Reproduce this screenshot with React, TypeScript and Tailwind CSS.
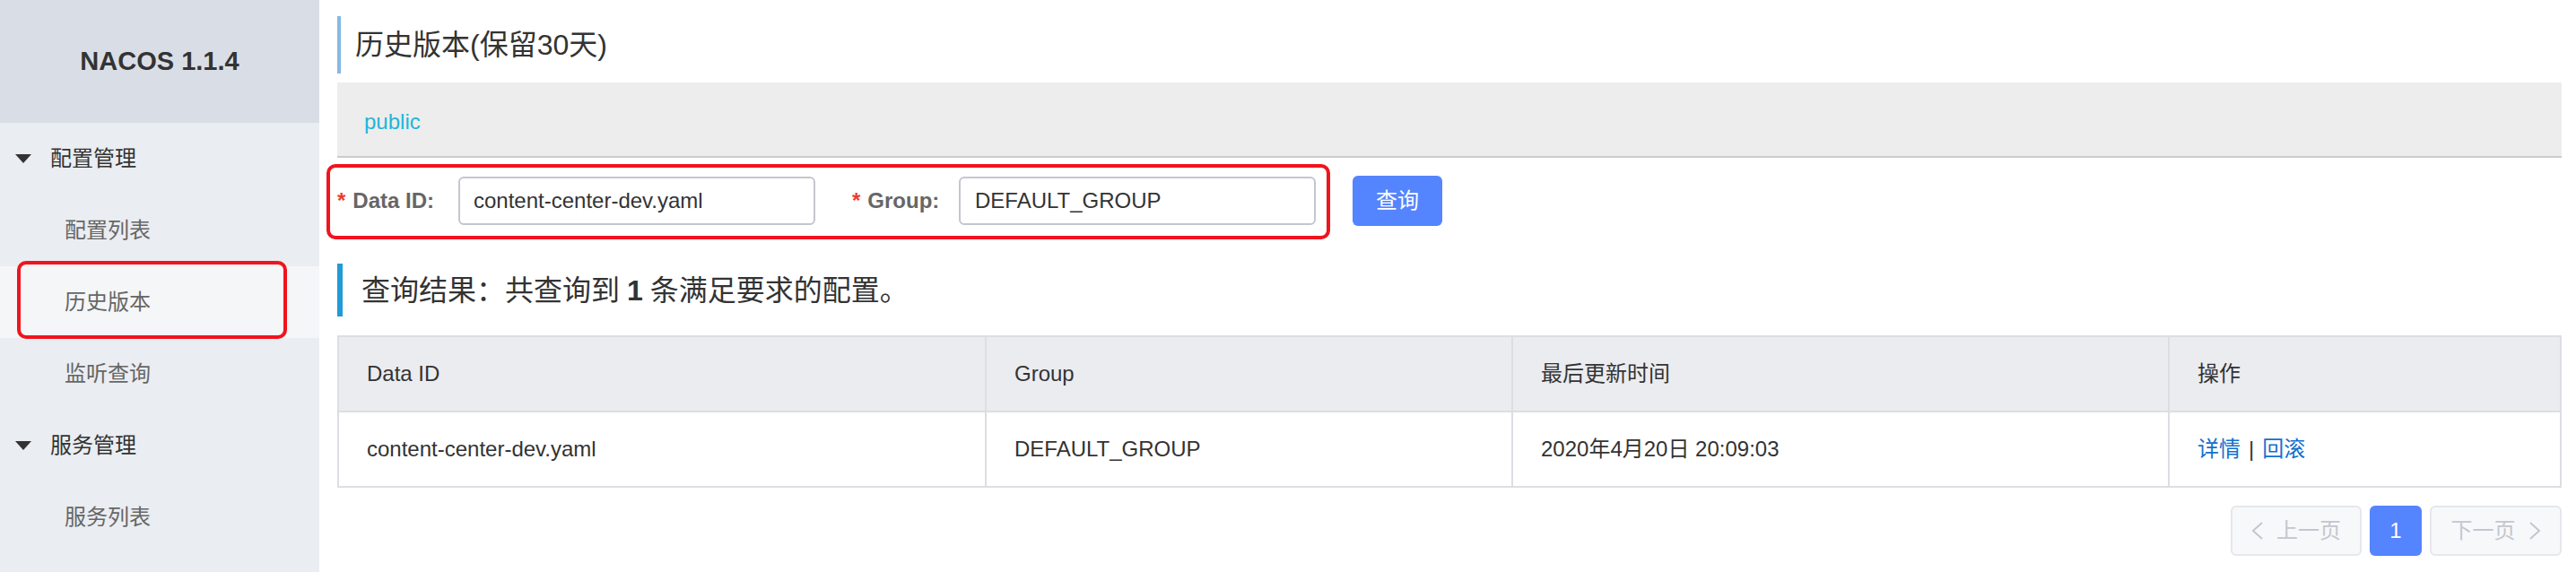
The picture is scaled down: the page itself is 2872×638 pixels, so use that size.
const font = "font-['Liberation_Sans','Noto_Sans_CJK_SC',sans-serif]"

function Caret() {
  return (
    <svg width="18" height="10" viewBox="0 0 18 10" className="shrink-0">
      <polygon points="0,0 18,0 9,10" fill="#333" />
    </svg>
  )
}

function Chevron({ dir }: { dir: "left" | "right" }) {
  return (
    <svg width="14" height="20" viewBox="0 0 14 20" className="shrink-0">
      <polyline
        points={dir === "left" ? "12,1 2,10 12,19" : "2,1 12,10 2,19"}
        fill="none"
        stroke="#c4c6cf"
        strokeWidth="2"
      />
    </svg>
  )
}

function Sidebar() {
  return (
    <aside className="w-[356px] shrink-0 bg-[#eaedf1]">
      <div className="flex h-[137px] items-center justify-center bg-[#d9dee6] text-[29px] font-bold text-[#333]">
        NACOS 1.1.4
      </div>
      <div className="flex h-[80px] items-center gap-[21px] pl-[17px] text-[24px] text-[#333]">
        <Caret />
        配置管理
      </div>
      <div className="flex h-[80px] items-center pl-[72px] text-[24px] text-[#666]">配置列表</div>
      <div className="relative flex h-[80px] items-center bg-[#f5f6f8] pl-[72px] text-[24px] text-[#666]">
        历史版本
        <div className="absolute -top-[6px] left-[19px] h-[87px] w-[301px] rounded-[10px] border-4 border-[#f0141e]" />
      </div>
      <div className="flex h-[80px] items-center pl-[72px] text-[24px] text-[#666]">监听查询</div>
      <div className="flex h-[80px] items-center gap-[21px] pl-[17px] text-[24px] text-[#333]">
        <Caret />
        服务管理
      </div>
      <div className="flex h-[80px] items-center pl-[72px] text-[24px] text-[#666]">服务列表</div>
    </aside>
  )
}

const columns = ["Data ID", "Group", "最后更新时间", "操作"]

export default function App() {
  return (
    <div className={`flex h-[638px] w-[2872px] overflow-hidden bg-white ${font}`}>
      <Sidebar />
      <main className="min-w-0 flex-1 pr-[16px] pl-[20px]">
        <div className="mt-[18px] flex h-[64px] items-center border-l-4 border-[#88b8e0] pl-[16px] text-[32px] text-[#333]">
          历史版本(保留30天)
        </div>

        <div className="mt-[10px] flex h-[84px] items-center border-b-2 border-[#cccccc] bg-[#ededed] pt-[6px] pl-[30px] text-[24px] text-[#1fb5d9]">
          public
        </div>

        <div className="relative mt-[20px] flex h-[56px] items-center">
          <div className="flex w-[135px] items-center text-[24px] font-bold text-[#666]">
            <span className="mr-[8px] text-[#ee3b2b]">*</span>
            Data ID:
          </div>
          <input
            readOnly
            value="content-center-dev.yaml"
            className="h-[54px] w-[398px] rounded-[6px] border-2 border-[#c4c6cf] px-[15px] text-[24px] text-[#333] outline-none"
          />
          <div className="ml-[41px] flex w-[119px] items-center text-[24px] font-bold text-[#666]">
            <span className="mr-[8px] text-[#ee3b2b]">*</span>
            Group:
          </div>
          <input
            readOnly
            value="DEFAULT_GROUP"
            className="h-[54px] w-[398px] rounded-[6px] border-2 border-[#c4c6cf] px-[16px] text-[24px] text-[#333] outline-none"
          />
          <button
            type="button"
            className="ml-[41px] h-[56px] w-[100px] rounded-[6px] bg-[#5584ff] text-[24px] text-white"
          >
            查询
          </button>
          <div className="absolute -top-[13px] -left-[12px] h-[84px] w-[1119px] rounded-[10px] border-4 border-[#f0141e]" />
        </div>

        <div className="mt-[42px] flex h-[59px] items-center border-l-[6px] border-[#209bd6] pl-[21px] text-[32px] text-[#333]">
          查询结果：共查询到 <b className="mx-[8px]">1</b> 条满足要求的配置。
        </div>

        <div className="mt-[21px] border-2 border-[#dcdee3] text-[24px] text-[#333]">
          <div className="grid h-[84px] grid-cols-[720px_587px_732px_1fr] border-b-2 border-[#dcdee3] bg-[#ebecf0]">
            {columns.map((c, i) => (
              <div
                key={c}
                className={`flex items-center pl-[31px] ${i > 0 ? "border-l-2 border-[#dcdee3]" : ""}`}
              >
                {c}
              </div>
            ))}
          </div>
          <div className="grid h-[82px] grid-cols-[720px_587px_732px_1fr]">
            <div className="flex items-center pl-[31px]">content-center-dev.yaml</div>
            <div className="flex items-center border-l-2 border-[#dcdee3] pl-[31px]">DEFAULT_GROUP</div>
            <div className="flex items-center border-l-2 border-[#dcdee3] pl-[31px]">2020年4月20日 20:09:03</div>
            <div className="flex items-center border-l-2 border-[#dcdee3] pl-[31px]">
              <a className="text-[#1170cf]">详情</a>
              <span className="mx-[9px] text-[#333]">|</span>
              <a className="text-[#1170cf]">回滚</a>
            </div>
          </div>
        </div>

        <div className="mt-[20px] flex justify-end gap-[9px]">
          <div className="flex h-[56px] w-[146px] items-center justify-center gap-[14px] rounded-[6px] border-2 border-[#e6e7eb] bg-[#f7f8fa] text-[24px] text-[#c4c6cf]">
            <Chevron dir="left" />
            上一页
          </div>
          <div className="flex h-[56px] w-[58px] items-center justify-center rounded-[6px] bg-[#5584ff] text-[24px] text-white">
            1
          </div>
          <div className="flex h-[56px] w-[147px] items-center justify-center gap-[14px] rounded-[6px] border-2 border-[#e6e7eb] bg-[#f7f8fa] text-[24px] text-[#c4c6cf]">
            下一页
            <Chevron dir="right" />
          </div>
        </div>
      </main>
    </div>
  )
}
